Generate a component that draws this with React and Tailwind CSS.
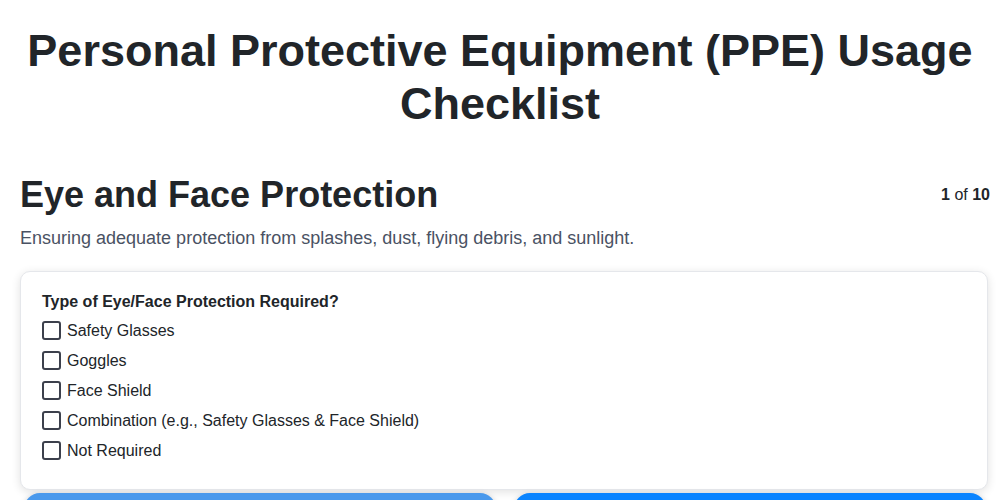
const options = [
  'Safety Glasses',
  'Goggles',
  'Face Shield',
  'Combination (e.g., Safety Glasses & Face Shield)',
  'Not Required',
];

const App = () => {
  return (
    <div className="min-h-screen bg-white text-[#212529] [font-family:'Liberation_Sans',Arial,sans-serif]">
      <h1 className="pt-[24px] text-center text-[45px] font-bold leading-[53px]">
        Personal Protective Equipment (PPE) Usage Checklist
      </h1>

      <div className="pl-[20px] pr-[10px]">
        <div className="mt-[43px] flex items-start justify-between">
          <h2 className="text-[36px] font-bold leading-[44px]">Eye and Face Protection</h2>
          <p className="pt-[10px] text-[16px]">
            <span className="font-bold">1</span> of <span className="font-bold">10</span>
          </p>
        </div>
        <p className="mt-[10px] text-[18px] leading-[22px] text-[#4a5263]">
          Ensuring adequate protection from splashes, dust, flying debris, and sunlight.
        </p>

        <div className="mr-[2px] mt-[22px] rounded-[10px] border border-[#e5e7eb] bg-white px-[21px] pb-[29px] pt-[20px] shadow-[0_2px_10px_rgba(0,0,0,0.12)]">
          <p className="text-[16px] font-bold leading-[20px]">Type of Eye/Face Protection Required?</p>
          <div className="mt-[9px] flex flex-col gap-[11px]">
            {options.map((option) => (
              <label key={option} className="flex items-center gap-[6px] text-[16px] leading-[18px]">
                <span className="h-[19px] w-[19px] shrink-0 rounded-[3px] border-2 border-[#3c404c] bg-white" />
                {option}
              </label>
            ))}
          </div>
        </div>

        <div className="mt-[3px] flex gap-[18px] px-[4px]">
          <button className="h-[40px] flex-1 rounded-[16px] bg-[#4a99ec] shadow-[0_2px_6px_rgba(0,0,0,0.25)]" />
          <button className="h-[40px] flex-1 rounded-[16px] bg-[#0a84ff] shadow-[0_2px_6px_rgba(0,0,0,0.25)]" />
        </div>
      </div>
    </div>
  );
};

export default App;
